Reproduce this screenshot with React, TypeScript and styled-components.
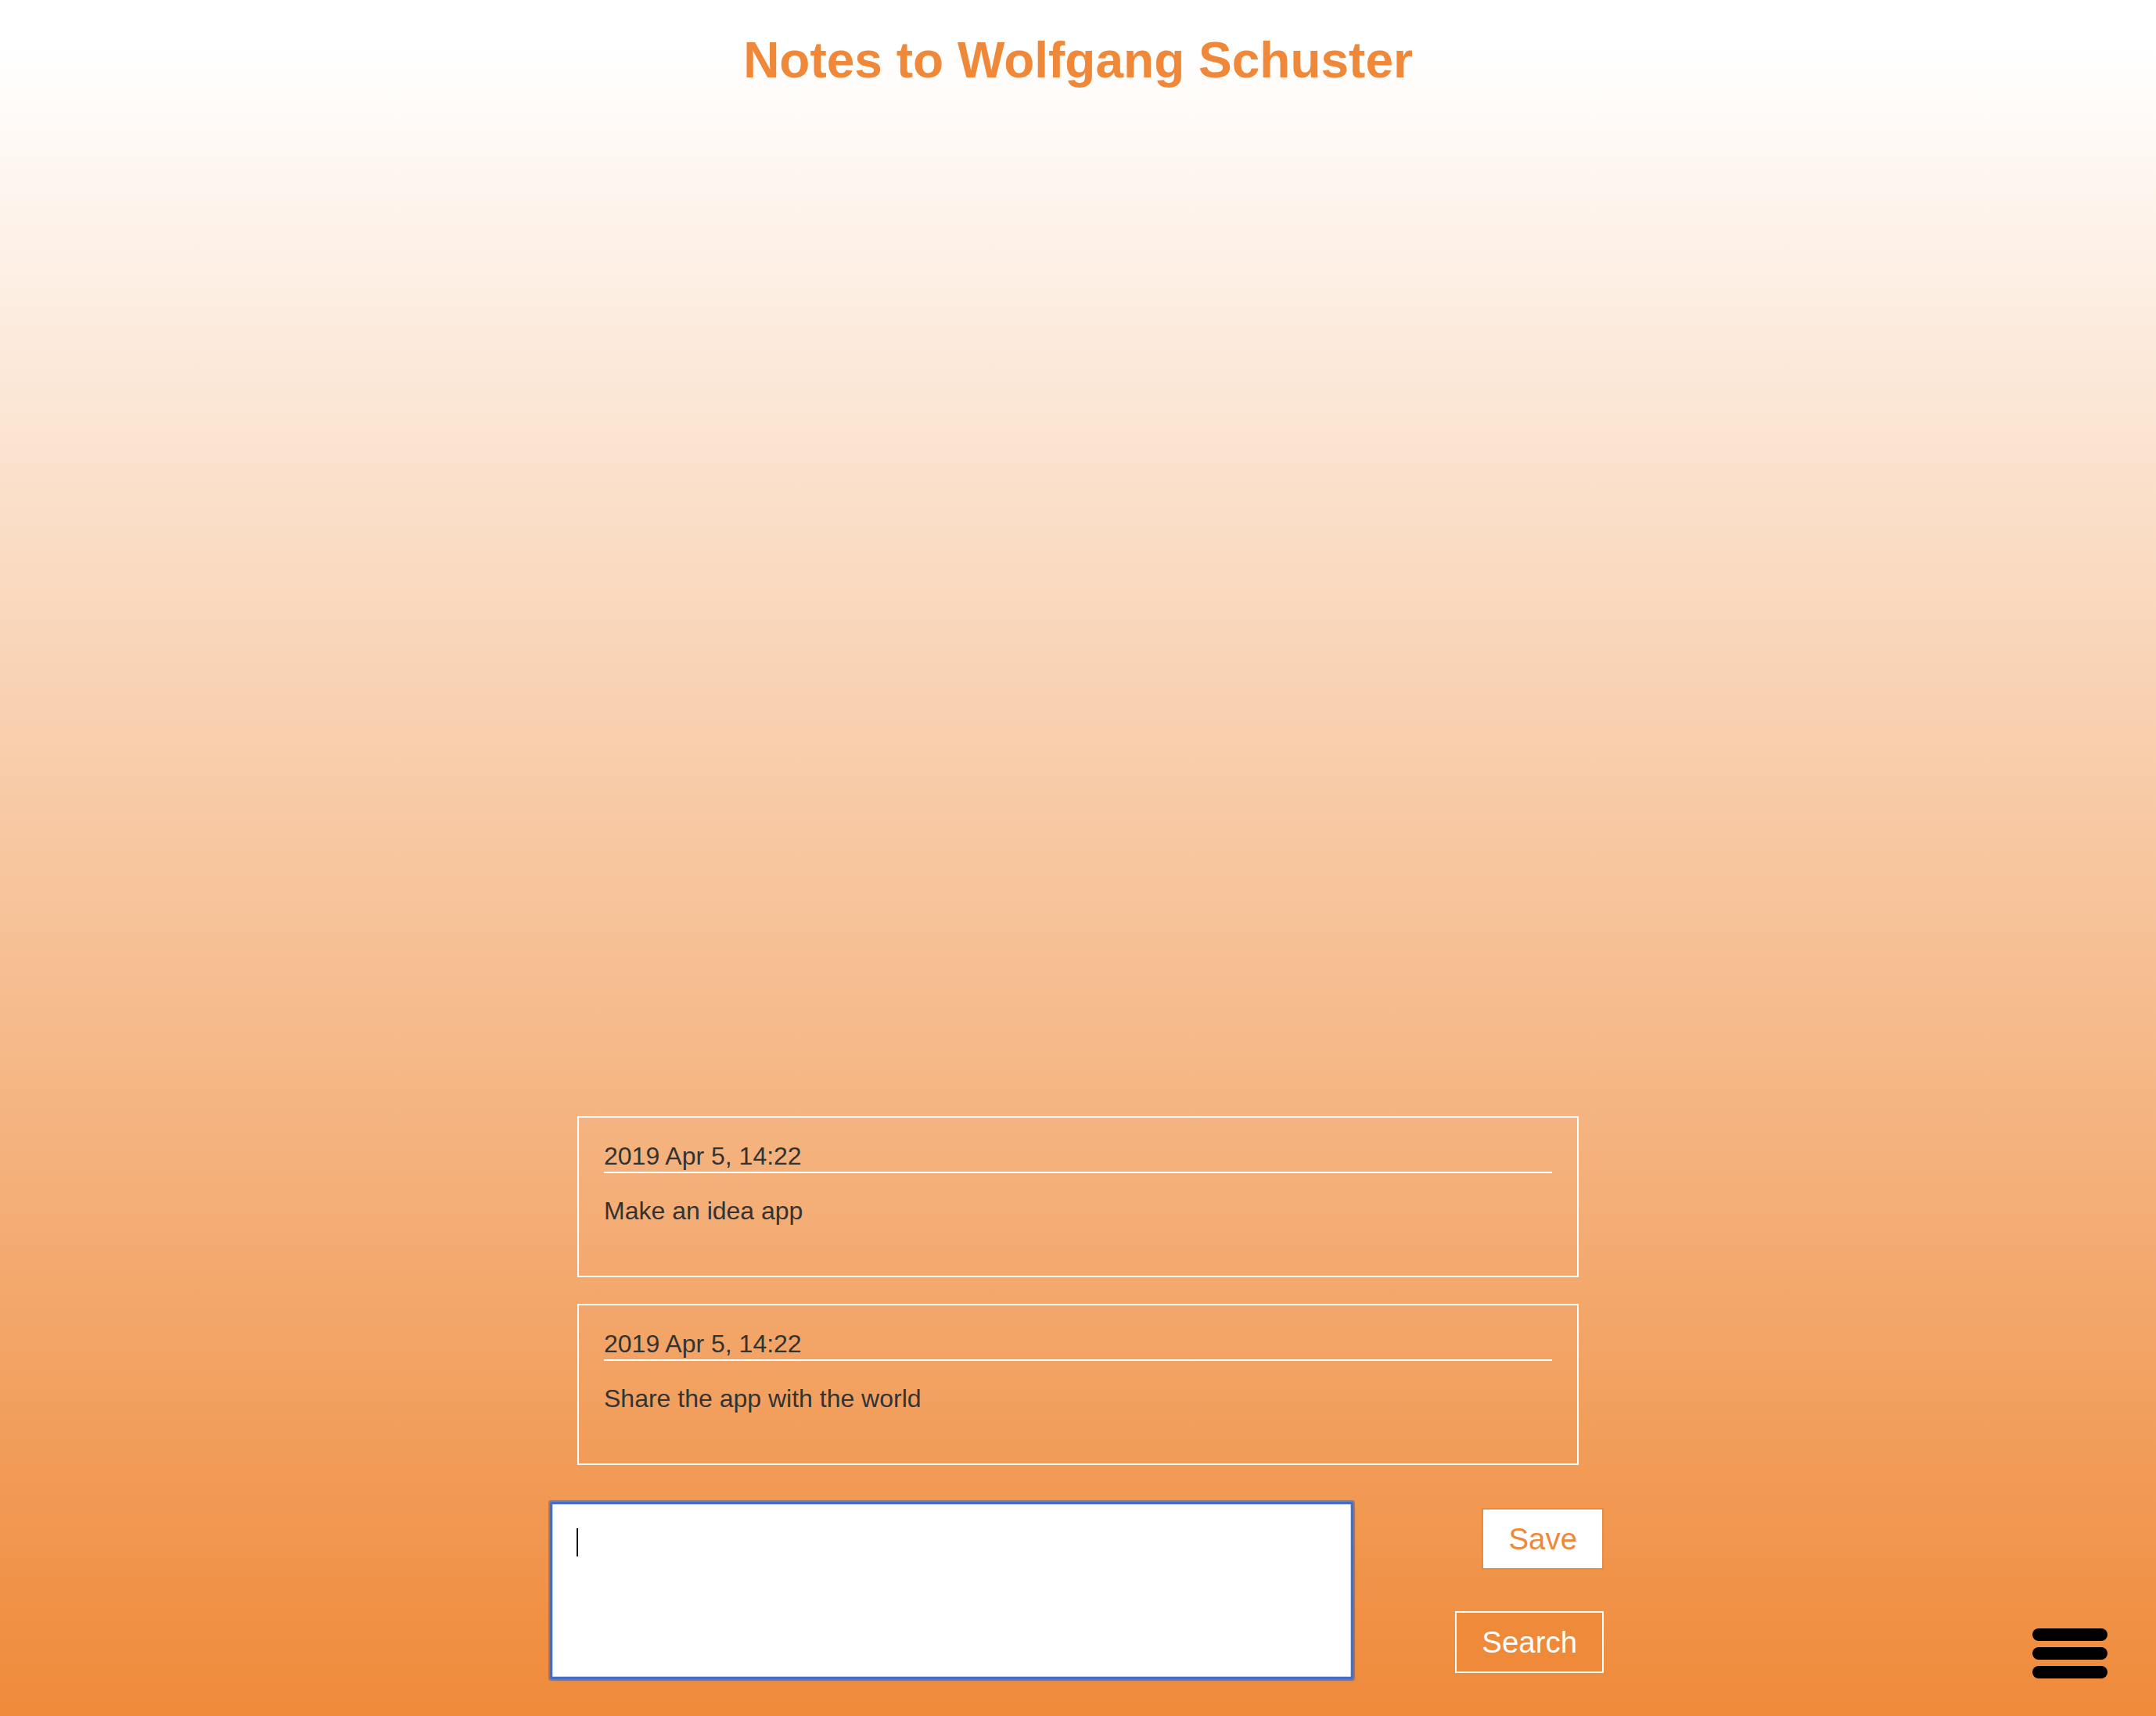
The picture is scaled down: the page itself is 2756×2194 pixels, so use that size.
import React, { useState } from "react";
import styled, { createGlobalStyle } from "styled-components";

const GlobalStyle = createGlobalStyle`
  * {
    box-sizing: border-box;
  }
  html, body {
    margin: 0;
    padding: 0;
  }
  body {
    font-family: "Liberation Sans", Arial, Helvetica, sans-serif;
    background: linear-gradient(to bottom, #ffffff 60px, #ef8a3a 100%);
    min-height: 100vh;
  }
`;

const Page = styled.div`
  min-height: 100vh;
  display: flex;
  flex-direction: column;
  padding-bottom: 50px;
`;

const Title = styled.h1`
  margin: 41px 0 0;
  text-align: center;
  font-size: 64px;
  line-height: 72px;
  font-weight: 700;
  color: #f0883a;
`;

const Spacer = styled.div`
  flex: 1;
`;

const NoteList = styled.ul`
  list-style: none;
  margin: 0 auto 50px;
  padding: 0;
  width: 1280px;
  display: flex;
  flex-direction: column;
  gap: 34px;
`;

const Note = styled.li`
  border: 2px solid #ffffff;
  padding: 31px 32px 64px;
  color: #333333;
  font-size: 32px;
  line-height: 37px;
`;

const NoteDate = styled.div`
  padding-bottom: 1px;
  border-bottom: 2px solid #ffffff;
`;

const NoteText = styled.p`
  margin: 30px 0 0;
`;

const NoteForm = styled.form`
  width: 1344px;
  margin: 0 auto;
  display: flex;
  justify-content: space-between;
  align-items: flex-start;
`;

const InputWrap = styled.div`
  position: relative;
  width: 1021px;
  height: 221px;
`;

const NoteInput = styled.textarea`
  display: block;
  width: 100%;
  height: 100%;
  resize: none;
  padding: 30px;
  font-family: "Liberation Sans", Arial, sans-serif;
  font-size: 32px;
  line-height: 37px;
  color: #333333;
  background: #ffffff;
  border: 1px solid #c3d7f8;
  border-radius: 1px;
  outline: none;
  caret-color: transparent;
  box-shadow: 0 0 0 3px #426ecb, 0 0 0 5px rgba(80, 100, 160, 0.55),
    3px 3px 4px rgba(90, 90, 110, 0.35);
`;

const Caret = styled.span`
  position: absolute;
  left: 31px;
  top: 31px;
  width: 2px;
  height: 36px;
  background: #000000;
`;

const ButtonColumn = styled.div`
  display: flex;
  flex-direction: column;
  align-items: flex-end;
  padding-top: 5px;
  gap: 53px;
`;

interface IButtonProps {
  variant: "light" | "outline";
}

const FormButton = styled("button")<IButtonProps>`
  font-family: "Liberation Sans", Arial, sans-serif;
  font-size: 38.4px;
  line-height: 45px;
  padding: 15px 32px;
  cursor: pointer;
  border-radius: 0;
  border: 2px solid ${props => (props.variant === "light" ? "#ee883a" : "#ffffff")};
  background: ${props => (props.variant === "light" ? "#ffffff" : "#ef8a3a")};
  color: ${props => (props.variant === "light" ? "#f0883a" : "#ffffff")};
`;

const MenuButton = styled.button`
  position: fixed;
  right: 62px;
  bottom: 48px;
  width: 96px;
  padding: 0;
  border: none;
  background: transparent;
  display: flex;
  flex-direction: column;
  gap: 8px;
  cursor: pointer;
`;

const MenuBar = styled.span`
  display: block;
  height: 16px;
  border-radius: 8px;
  background: #000000;
`;

interface INote {
  date: string;
  text: string;
}

const initialNotes: INote[] = [
  { date: "2019 Apr 5, 14:22", text: "Make an idea app" },
  { date: "2019 Apr 5, 14:22", text: "Share the app with the world" }
];

function App() {
  const [notes] = useState<INote[]>(initialNotes);
  const [draft, setDraft] = useState("");

  return (
    <>
      <GlobalStyle />
      <Page>
        <Title>Notes to Wolfgang Schuster</Title>
        <Spacer />
        <NoteList>
          {notes.map((note, index) => (
            <Note key={index}>
              <NoteDate>{note.date}</NoteDate>
              <NoteText>{note.text}</NoteText>
            </Note>
          ))}
        </NoteList>
        <NoteForm onSubmit={(e: React.FormEvent) => e.preventDefault()}>
          <InputWrap>
            <NoteInput
              value={draft}
              onChange={(e: React.ChangeEvent<HTMLTextAreaElement>) =>
                setDraft(e.target.value)
              }
            />
            {draft === "" && <Caret />}
          </InputWrap>
          <ButtonColumn>
            <FormButton variant="light" type="submit">
              Save
            </FormButton>
            <FormButton variant="outline" type="button">
              Search
            </FormButton>
          </ButtonColumn>
        </NoteForm>
      </Page>
      <MenuButton aria-label="menu">
        <MenuBar />
        <MenuBar />
        <MenuBar />
      </MenuButton>
    </>
  );
}

export default App;
